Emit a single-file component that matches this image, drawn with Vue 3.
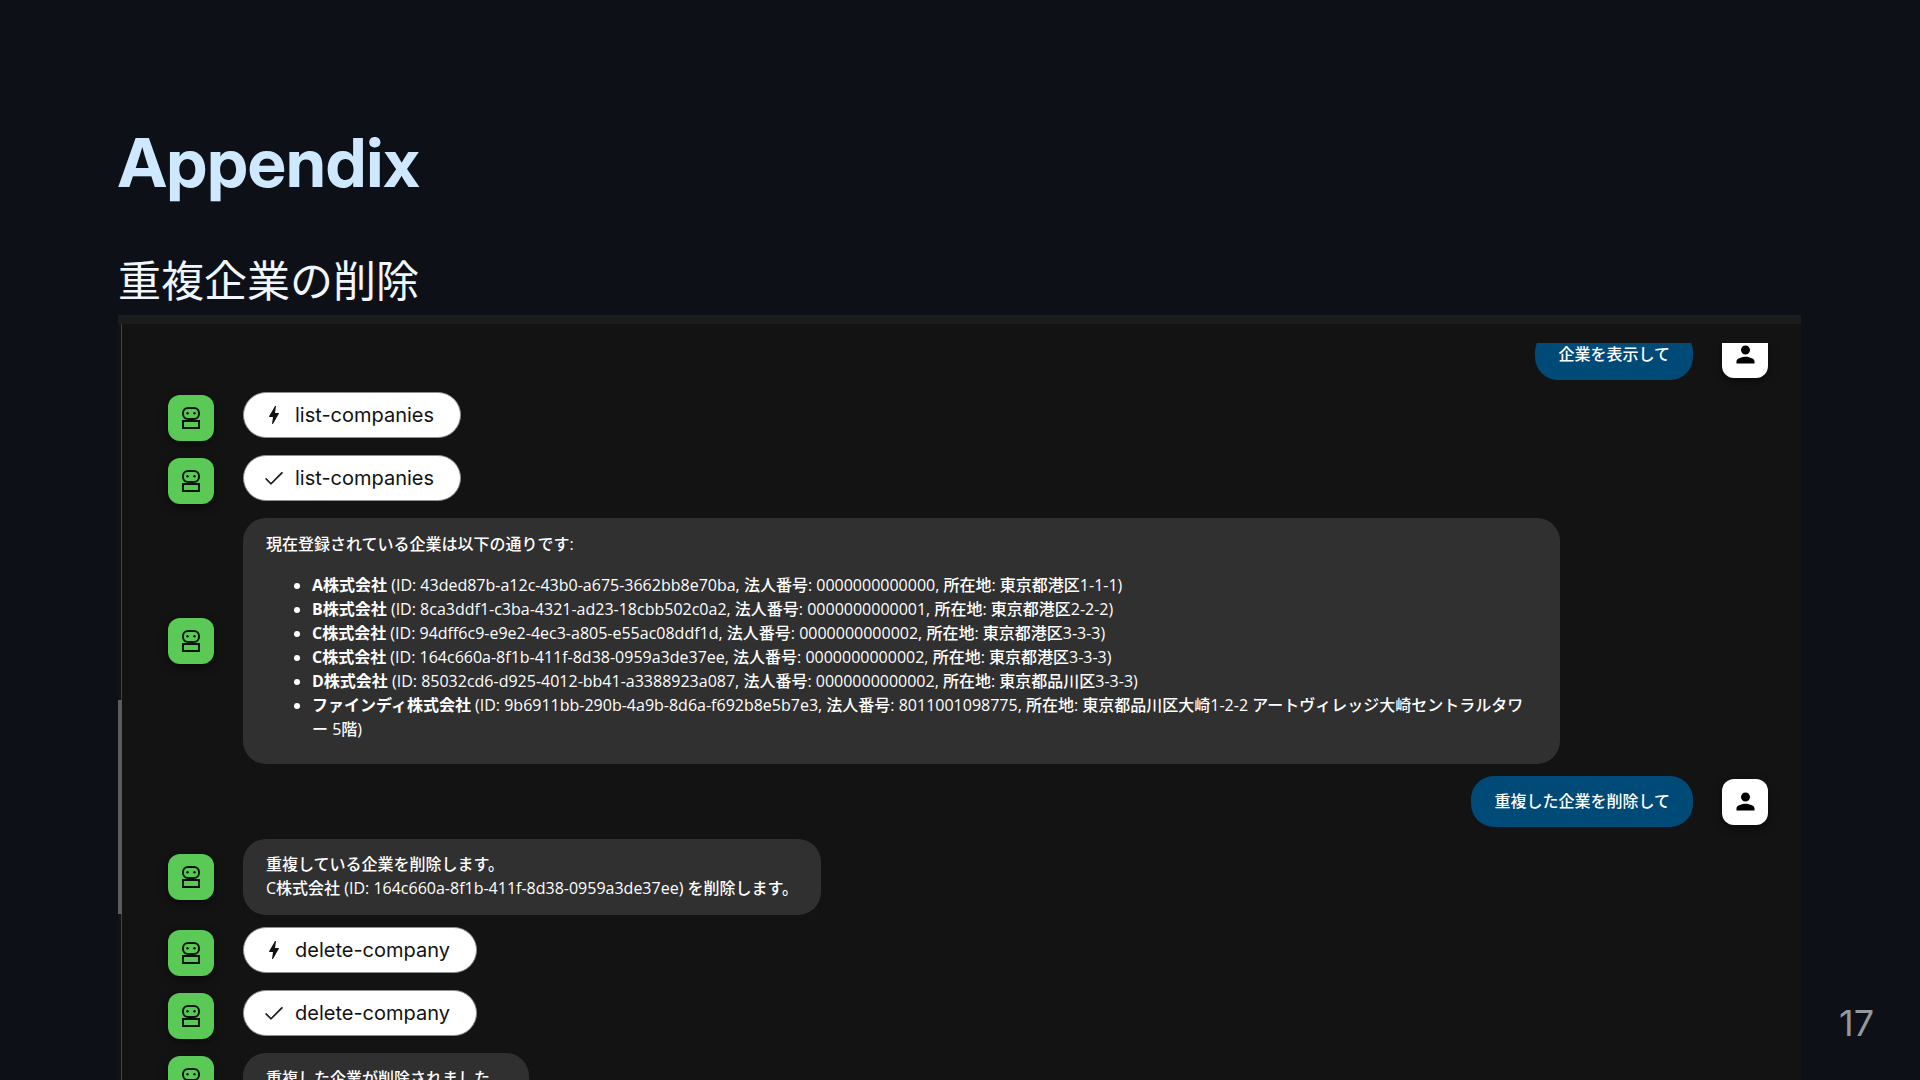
<template>
  <main class="slide">
    <h1>Appendix</h1>
    <p class="subtitle">重複企業の削除</p>

    <section class="panel">
      <div class="scroll-thumb"></div>
      <div class="chat">
        <div
          v-for="(msg, index) in messages"
          :key="index"
          class="row"
          :class="[msg.from, msg.type]"
        >
          <div class="avatar">
            <svg v-if="msg.from === 'bot'" width="18" height="22" viewBox="0 0 18 22" fill="none" stroke="#081508" stroke-width="2">
              <rect x="1" y="1" width="16" height="11" rx="5" />
              <path d="M1 14h16v7H1z" />
              <circle cx="5.5" cy="6.3" r="1.2" fill="#081508" stroke="none" />
              <circle cx="12.5" cy="6.3" r="1.2" fill="#081508" stroke="none" />
            </svg>
            <svg v-else width="27" height="27" viewBox="0 0 24 24" fill="#000">
              <path d="M12 12c2.21 0 4-1.79 4-4s-1.79-4-4-4-4 1.79-4 4 1.79 4 4 4zm0 2c-2.67 0-8 1.34-8 4v2h16v-2c0-2.66-5.33-4-8-4z" />
            </svg>
          </div>

          <button v-if="msg.type === 'tool'" type="button" class="pill">
            <svg width="24" height="24" viewBox="0 0 24 24" fill="#111">
              <path v-if="msg.done" d="M9 17 4.2 12.2 3.4 13 9 18.6 20.7 6.9l-.9-.9z" stroke="#111" stroke-width=".6" />
              <path v-else d="M11 21h-1l1-7H7.5c-.58 0-.57-.32-.38-.66C8.48 10.94 10.42 7.54 13 3h1l-1 7h3.5c.49 0 .56.33.47.51C12.96 17.55 11 21 11 21z" />
            </svg>
            <span>{{ msg.text }}</span>
          </button>

          <div v-else class="bubble">
            <p v-for="line in msg.lines" :key="line">{{ line }}</p>
            <ul v-if="msg.companies">
              <li v-for="company in msg.companies" :key="company.id">
                <strong>{{ company.name }}</strong>
                (ID: {{ company.id }}, 法人番号: {{ company.number }}, 所在地: {{ company.address }})
              </li>
            </ul>
          </div>
        </div>
      </div>
    </section>

    <span class="page-number">17</span>
  </main>
</template>

<script setup>
const companies = [
  { name: 'A株式会社', id: '43ded87b-a12c-43b0-a675-3662bb8e70ba', number: '0000000000000', address: '東京都港区1-1-1' },
  { name: 'B株式会社', id: '8ca3ddf1-c3ba-4321-ad23-18cbb502c0a2', number: '0000000000001', address: '東京都港区2-2-2' },
  { name: 'C株式会社', id: '94dff6c9-e9e2-4ec3-a805-e55ac08ddf1d', number: '0000000000002', address: '東京都港区3-3-3' },
  { name: 'C株式会社', id: '164c660a-8f1b-411f-8d38-0959a3de37ee', number: '0000000000002', address: '東京都港区3-3-3' },
  { name: 'D株式会社', id: '85032cd6-d925-4012-bb41-a3388923a087', number: '0000000000002', address: '東京都品川区3-3-3' },
  {
    name: 'ファインディ株式会社',
    id: '9b6911bb-290b-4a9b-8d6a-f692b8e5b7e3',
    number: '8011001098775',
    address: '東京都品川区大崎1-2-2 アートヴィレッジ大崎セントラルタワー 5階'
  }
]

const messages = [
  { from: 'user', type: 'text', lines: ['企業を表示して'] },
  { from: 'bot', type: 'tool', text: 'list-companies', done: false },
  { from: 'bot', type: 'tool', text: 'list-companies', done: true },
  { from: 'bot', type: 'list', lines: ['現在登録されている企業は以下の通りです:'], companies },
  { from: 'user', type: 'text', lines: ['重複した企業を削除して'] },
  {
    from: 'bot',
    type: 'text',
    lines: [
      '重複している企業を削除します。',
      'C株式会社 (ID: 164c660a-8f1b-411f-8d38-0959a3de37ee) を削除します。'
    ]
  },
  { from: 'bot', type: 'tool', text: 'delete-company', done: false },
  { from: 'bot', type: 'tool', text: 'delete-company', done: true },
  { from: 'bot', type: 'text', lines: ['重複した企業が削除されました。'] }
]
</script>

<style>
body {
  background-color: #0d1117;
}
</style>

<style scoped>
.slide {
  position: relative;
  display: flex;
  flex-direction: column;
  box-sizing: border-box;
  height: 100vh;
  padding: 120px 119px 0 118px;
  overflow: hidden;
  background-color: #0d1117;
  color: #f0f6fc;
  font-family: Inter, "Noto Sans CJK JP", sans-serif;
}

h1 {
  margin: 0;
  color: #cee8ff;
  font-family: "Inter Display", Inter, sans-serif;
  font-size: 68px;
  font-weight: 700;
  font-variation-settings: "opsz" 32;
  line-height: 84px;
}

.subtitle {
  margin: 47px 0 3px;
  font-size: 43px;
  font-weight: 400;
  line-height: 61px;
}

/* Chat panel */
.panel {
  position: relative;
  flex: 1;
  min-height: 0;
  box-sizing: border-box;
  padding-top: 19px;
  border-top: 9px solid #1b1c1c;
  background-color: #131313;
  box-shadow: inset 3px 0 #131313, inset 4px 0 #444;
  overflow: hidden;
}

.scroll-thumb {
  position: absolute;
  top: 376px;
  left: 0;
  width: 4px;
  height: 214px;
  background-color: #5c5c5c;
}

.chat {
  display: flex;
  flex-direction: column;
  justify-content: flex-start;
  gap: 12px;
  height: 100%;
  padding: 0 33px 0 50px;
  overflow: hidden;
}

.row {
  display: flex;
  flex-shrink: 0;
  align-items: center;
  gap: 29px;
}

/* the log is scrolled a little past its first message */
.row:first-child {
  margin-top: -14px;
}

.row.user {
  flex-direction: row-reverse;
}

.row.bot {
  padding-right: 208px;
}

.row.tool {
  height: 51px;
}

.avatar {
  display: flex;
  flex-shrink: 0;
  align-items: center;
  justify-content: center;
  width: 46px;
  height: 46px;
  border-radius: 12px;
  box-shadow: 0 3px 8px rgba(0, 0, 0, 0.5);
}

.bot .avatar {
  background-color: #5bc956;
}

.user .avatar {
  background-color: #fff;
}

.pill {
  display: flex;
  align-self: flex-start;
  align-items: center;
  gap: 9px;
  box-sizing: border-box;
  height: 46px;
  padding: 0 26px 0 18px;
  border: 1px solid #8e918f;
  border-radius: 23px;
  background-color: #fff;
  color: #111;
  font-family: inherit;
  font-size: 20px;
}

.bubble {
  padding: 13px 23px 15px;
  border-radius: 23px;
  background-color: #303030;
  color: #fff;
  font-family: "Open Sans", "Noto Sans CJK JP", sans-serif;
  font-size: 16px;
  font-weight: 500;
  line-height: 24px;
}

.user .bubble {
  padding-bottom: 14px;
  background-color: #004a77;
}

.list .bubble {
  flex: 1;
  padding-top: 14px;
  padding-bottom: 23px;
}

.bubble p {
  margin: 0;
}

.bubble ul {
  margin: 17px 0 0;
  padding-left: 46px;
  line-break: anywhere;
}

.page-number {
  position: absolute;
  right: 46px;
  bottom: 36px;
  color: #96989b;
  font-size: 36px;
  line-height: 42px;
}
</style>
